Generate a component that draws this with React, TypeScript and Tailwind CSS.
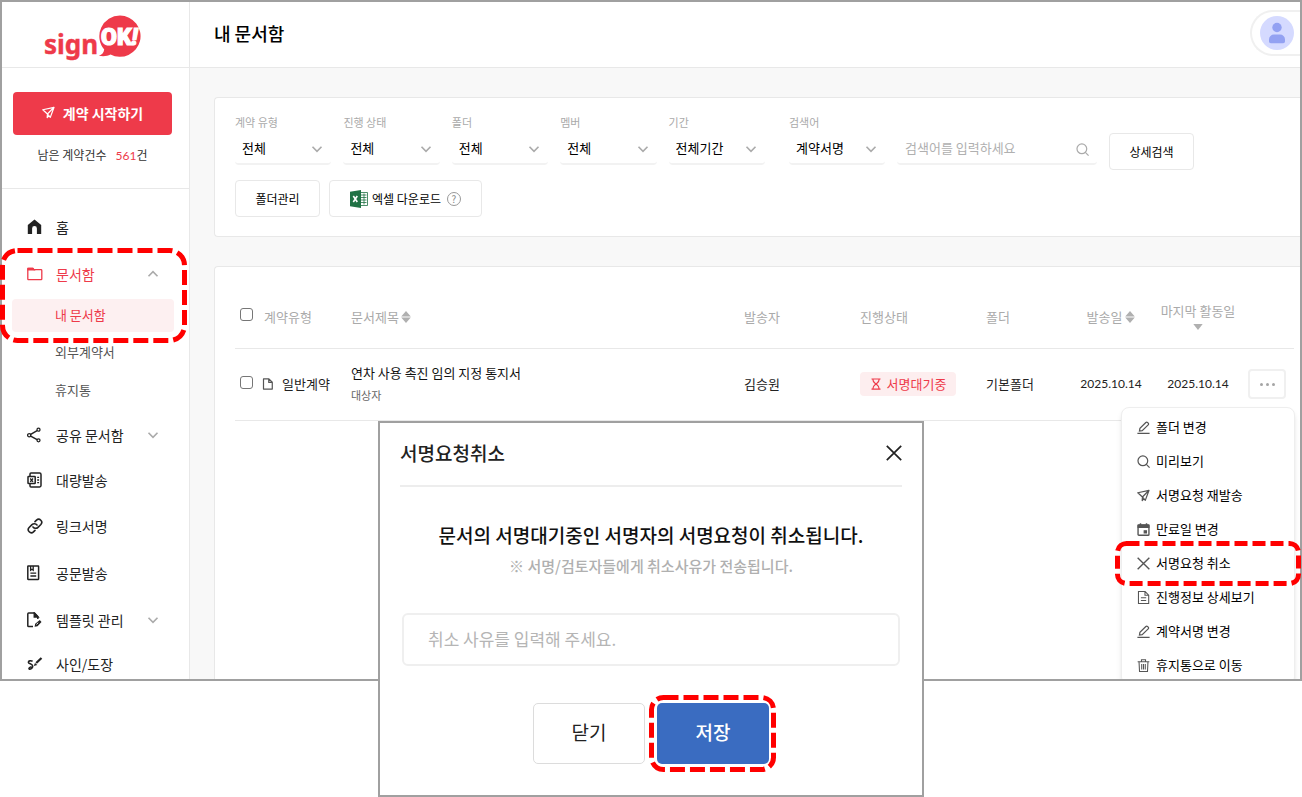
import React from "react";

type IconProps = { className?: string };

function Svg({ className = "", children, box = 16 }: { className?: string; children: React.ReactNode; box?: number }) {
  return (
    <svg
      aria-hidden="true"
      viewBox={`0 0 ${box} ${box}`}
      fill="none"
      stroke="currentColor"
      strokeWidth="1.3"
      className={`shrink-0 ${className}`}
    >
      {children}
    </svg>
  );
}

const HomeIcon = () => (
  <Svg className="size-4">
    <path d="M7.500.6 14.200 6V15H9.900V9.400a2.400 2.400 0 0 0-4.800 0V15H.8V6Z" fill="#222" stroke="none" />
  </Svg>
);
const FolderIcon = () => (
  <Svg className="size-4">
    <path d="M.8 13V3c0-.4.3-.7.7-.7h4.300l1.200 1.300h7c.5 0 .8.3.8.8V13c0 .4-.3.7-.7.7H1.500a.7.700 0 0 1-.7-.7Z" />
    <path d="M1 2.500h4.800l1.200 1.300H1Z" fill="currentColor" />
  </Svg>
);
const ShareIcon = () => (
  <Svg className="size-4">
    <circle cx="2.2" cy="8.200" r="1.600" />
    <circle cx="11.500" cy="2.700" r="1.500" />
    <circle cx="11.500" cy="13.300" r="1.500" />
    <path strokeWidth="1.500" d="m3.700 7.400 6.400-3.800M3.700 9.100l6.400 3.500" />
  </Svg>
);
const BulkIcon = () => (
  <Svg className="size-4">
    <path strokeWidth="1.500" d="M3 4V2c0-.6.4-1 1-1h8.600c.8 0 1.400.6 1.400 1.400v11.200c0 .8-.6 1.400-1.400 1.400H4c-.6 0-1-.4-1-1v-2" />
    <rect x="1" y="4.500" width="7.200" height="7" rx=".6" strokeWidth="1.500" />
    <path d="m3.200 6.500 2.800 3.300m0-3.300L3.200 9.800M10.200 5.300h1.900M10.200 8h1.900M10.200 10.700h1.900" />
  </Svg>
);
const LinkIcon = () => (
  <Svg className="size-4" box={24}>
    <path
      strokeWidth="2.400"
      strokeLinecap="round"
      d="M9 13.500a5 5 0 0 0 7.500.5l4.300-4.300a4.600 4.600 0 0 0-6.500-6.500l-2.300 2.300M15 10.500a5 5 0 0 0-7.500-.5l-4.300 4.300a4.600 4.600 0 0 0 6.500 6.500l2.300-2.300"
    />
  </Svg>
);
const OfficialIcon = () => (
  <Svg className="size-4">
    <rect x=".8" y="1" width="10.800" height="13.400" rx=".4" strokeWidth="1.500" />
    <path d="M3.600 1v4.200l1.300-1 1.300 1V1M3.400 8.200h5.800M3.400 11h5.800" />
  </Svg>
);
const TemplateIcon = () => (
  <Svg className="size-4">
    <path strokeWidth="1.500" d="M6 14.600H1.700a.9.900 0 0 1-.9-.9V2c0-.5.4-.9.900-.9H7.500l3.300 3.500v2.500" />
    <path d="M7.200 1v4h4Z" fill="currentColor" />
    <path d="m7.600 14.800.6-3 4.600-3.900 1.700 2-4 4.400Z" fill="currentColor" stroke="none" />
    <path d="m9.400 12.400 1.800-1.600" stroke="#fff" strokeWidth=".9" />
  </Svg>
);
const StampIcon = () => (
  <Svg className="size-4">
    <path strokeWidth="1.600" d="M5.600 5.300C4 4.400 1.200 4.800 1.400 6.300c.3 1.700 4.300 1.500 4.300 3.900 0 1.900-2.500 3.500-3.500 2.800-.8-.7.700-1.900 2.300-2.200" />
    <path d="m9.200 7 5.300-5" strokeWidth="2.200" />
    <path d="m6.700 10 1.300-3 2.300 2Z" fill="currentColor" stroke="none" />
  </Svg>
);
const PlaneIcon = ({ className = "size-[13px]" }: IconProps) => (
  <Svg className={className}>
    <path strokeWidth="1.500" strokeLinejoin="round" d="m1 4.600 13.800-3-4.600 12.400-3.500-4.200ZM14.800 1.600 6.700 9.800l-.3 4.400 2-2.200" />
  </Svg>
);
const Chevron = ({ up = false, className = "" }: { up?: boolean; className?: string }) => (
  <Svg className={`size-3 text-[#ababab] ${className}`}>
    <path strokeWidth="2.200" d={up ? "m2 11 6-6 6 6" : "m2 5 6 6 6-6"} />
  </Svg>
);
const SearchIcon = ({ className = "" }: IconProps) => (
  <Svg className={`size-[13px] ${className}`}>
    <circle cx="7.200" cy="7.200" r="6" strokeWidth="1.500" />
    <path d="m11.500 11.500 4 4" strokeWidth="1.500" />
  </Svg>
);
const PencilIcon = () => (
  <Svg className="size-[13px]">
    <path strokeWidth="1.500" d="m3 12.300.6-3.200 7.300-7.300c.6-.6 1.400-.6 2 0l.9.900c.6.600.6 1.400 0 2l-7.400 7.200ZM.5 15.200h15" />
  </Svg>
);
const CalendarIcon = () => (
  <Svg className="size-[13px]">
    <rect x="1.300" y="2.500" width="13.400" height="12.500" rx="1" strokeWidth="1.700" />
    <path d="M1.300 2.500h13.400v3H1.300ZM8.800 9.500h2.900v2.700H8.800Z" fill="currentColor" />
    <path d="M4.300.3v3M11.700.3v3" strokeWidth="1.800" />
  </Svg>
);
const CloseIcon = ({ className = "size-[13px]" }: IconProps) => (
  <Svg className={className}>
    <path d="M.8.800 15.200 15.200M15.200.800.8 15.200" strokeWidth="1.700" />
  </Svg>
);
const DocIcon = () => (
  <Svg className="size-[13px]">
    <path d="M1.800 15.300V.7h8.200l4.400 4.500v10.100ZM9.800.8v4.500h4.500M4.800 8.300h6.500M4.800 11.600h6.500" />
  </Svg>
);
const TrashIcon = () => (
  <Svg className="size-[13px]">
    <path d="M.8 3.300h14.400M5.500 3V1h5v2M2.500 3.500l.6 11.800h9.800l.6-11.800M5.800 6v6.800M8 6v6.800M10.200 6v6.800" />
  </Svg>
);
const FileIcon = () => (
  <Svg className="size-3 text-[#555]">
    <path strokeLinejoin="round" strokeWidth="1.600" d="M2 14.800V1.200h7.200l4.500 4.500v9.100ZM9 1.500v4.400h4.500" />
  </Svg>
);
const HourglassIcon = () => (
  <Svg className="size-3">
    <path strokeWidth="1.600" d="M2 1.300h12M2 14.700h12M3.800 1.500c0 4 2.400 5 4.200 6.500 1.800-1.500 4.200-2.500 4.200-6.500M3.800 14.500c0-4 2.400-5 4.200-6.500 1.800 1.500 4.200 2.500 4.200 6.500" />
  </Svg>
);
const ExcelIcon = () => (
  <svg aria-hidden="true" viewBox="0 0 18 18" className="size-[18px] shrink-0">
    <path d="M10 2.500h7.500v13H10Z" fill="#fff" stroke="#207245" strokeWidth=".8" />
    <path d="M11 5h5.500M11 7.500h5.500M11 10h5.500M11 12.500h5.500M14 3.500v11" stroke="#207245" strokeWidth=".8" />
    <path d="M0 1.800 11 0v18L0 16.200Z" fill="#207245" />
    <path d="m3.300 6 4 6m0-6-4 6" stroke="#fff" strokeWidth="1.600" />
  </svg>
);
const Sorter = () => (
  <svg aria-hidden="true" viewBox="0 0 10 12" className="mt-0.5 h-3 w-[10px] shrink-0" fill="#b0b0b0">
    <path d="M5 0 9.800 5.400H.2ZM5 12 .2 6.600h9.600Z" />
  </svg>
);

function Highlight({ w, h, r, dash, className }: { w: number; h: number; r: number; dash: string; className: string }) {
  return (
    <svg aria-hidden="true" width={w} height={h} className={`pointer-events-none absolute z-20 max-w-none ${className}`}>
      <rect x="2.5" y="2.5" width={w - 5} height={h - 5} rx={r} fill="none" stroke="#ff0000" strokeWidth="5" strokeDasharray={dash} />
    </svg>
  );
}

function Logo() {
  return (
    <a href="#home" aria-label="signOK!">
      <svg viewBox="0 0 98 46" className="h-[46px] w-[98px]">
        <text x="0" y="39" fill="#ee3a4a" stroke="#ee3a4a" strokeWidth=".4" fontFamily="'Noto Sans'" fontWeight="700" fontSize="26">sign</text>
        <path d="M76 .6a20.600 20.600 0 1 1-9.500 38.900c-3 1.500-6.500 2.100-11.600 1.300 3.200-1.200 4.800-2.900 5.300-6.300A20.600 20.600 0 0 1 76 .6Z" fill="#ee3a4a" />
        <text x="57" y="30" fill="#fff" stroke="#fff" strokeWidth="1.200" fontFamily="Roboto" fontWeight="900" fontSize="23">
          OK<tspan fontStyle="italic">!</tspan>
        </text>
      </svg>
    </a>
  );
}

const navLink = "flex items-center gap-[13px] pl-[25px] pr-[30px] pb-0.5 text-sm text-[#222]";
const subLink = "flex h-[38px] items-center pb-0.5 pl-[53px] text-[13px] text-[#555]";

function Sidebar() {
  return (
    <aside className="flex w-[188px] shrink-0 flex-col border-r border-[#e8e8e8] bg-white">
      <div className="flex h-[66px] items-start justify-center border-b border-[#e8e8e8] pt-[13px] pr-[5px]">
        <Logo />
      </div>
      <div className="flex h-[121px] flex-col items-center border-b border-[#e8e8e8] pt-6 pr-[17px] pl-[11px]">
        <button className="flex h-[43px] w-full items-center justify-center gap-2 rounded bg-[#ee3a4a] pb-0.5 text-sm font-bold text-white">
          <PlaneIcon />
          계약 시작하기
        </button>
        <p className="mt-[10px] flex gap-[9px] text-xs leading-5 text-[#333]">
          <span>남은 계약건수</span>
          <span>
            <span className="font-[Lato] text-[#ee3a4a]">561</span>건
          </span>
        </p>
      </div>
      <nav className="pt-4">
        <a href="#home" className={`${navLink} h-[46px]`}>
          <HomeIcon />홈
        </a>
        <div className="relative">
          <a href="#docs" className="flex h-12 items-center gap-[13px] pr-[30px] pb-0.5 pl-[25px] text-sm text-[#ee3a4a]">
            <FolderIcon />
            <span className="grow">문서함</span>
            <Chevron up />
          </a>
          <a href="#mine" className="mr-[15px] ml-[10px] flex h-[33px] items-center rounded bg-[#fdf0f1] pb-0.5 pl-[43px] text-[13px] text-[#ee3a4a]">
            내 문서함
          </a>
          <Highlight w={187} h={95} r={15} dash="15 5" className="top-[-3px] left-[-2px]" />
        </div>
        <a href="#external" className={`${subLink} mt-0.5`}>외부계약서</a>
        <a href="#trash" className={`${subLink} mb-[3px]`}>휴지통</a>
        <a href="#shared" className={`${navLink} h-[45px]`}>
          <ShareIcon />
          <span className="grow">공유 문서함</span>
          <Chevron />
        </a>
        <a href="#bulk" className={`${navLink} h-[45px]`}>
          <BulkIcon />대량발송
        </a>
        <a href="#link" className={`${navLink} h-[47px]`}>
          <LinkIcon />링크서명
        </a>
        <a href="#official" className={`${navLink} h-[47px]`}>
          <OfficialIcon />공문발송
        </a>
        <a href="#template" className={`${navLink} h-[47px]`}>
          <TemplateIcon />
          <span className="grow">템플릿 관리</span>
          <Chevron />
        </a>
        <a href="#stamp" className={`${navLink} h-[35px] pt-[7px]`}>
          <StampIcon />사인/도장
        </a>
      </nav>
    </aside>
  );
}

function FilterSelect({ id, label, value }: { id: string; label: string; value: string }) {
  return (
    <div>
      <label htmlFor={id} className="block text-[11px] leading-4 text-[#aaa]">{label}</label>
      <div className="relative mt-0.5">
        <select id={id} className="block h-[33px] w-full appearance-none rounded border-b-2 border-[#f2f2f2] bg-transparent pl-[7px] text-[13px] text-black">
          <option>{value}</option>
        </select>
        <Chevron className="pointer-events-none absolute top-[11px] right-2" />
      </div>
    </div>
  );
}

const outlineButton =
  "flex h-[37px] items-center justify-center rounded border border-[#e8e8e8] bg-white text-xs text-black";

function Filters() {
  return (
    <section className="rounded-l border border-r-0 border-[#e8e8e8] bg-white px-5 pt-4 pb-[19px]">
      <div className="flex items-end">
        <div className="grid w-[530px] grid-cols-5 gap-3">
          <FilterSelect id="type" label="계약 유형" value="전체" />
          <FilterSelect id="status" label="진행 상태" value="전체" />
          <FilterSelect id="folder" label="폴더" value="전체" />
          <FilterSelect id="member" label="멤버" value="전체" />
          <FilterSelect id="period" label="기간" value="전체기간" />
        </div>
        <div className="ml-6 w-24">
          <FilterSelect id="keyword" label="검색어" value="계약서명" />
        </div>
        <div className="relative ml-3 w-[200px]">
          <input
            aria-label="검색어 입력"
            placeholder="검색어를 입력하세요"
            className="block h-[33px] w-full rounded border-b-2 border-[#f2f2f2] pr-8 pl-2 text-[13px] placeholder:text-[#b0b0b0]"
          />
          <SearchIcon className="absolute top-[11px] right-2 text-[#aaa]" />
        </div>
        <button className={`${outlineButton} -mb-[5px] ml-3 w-[85px]`}>상세검색</button>
      </div>
      <div className="mt-[15px] flex gap-[9px]">
        <button className={`${outlineButton} w-[85px]`}>폴더관리</button>
        <button className={`${outlineButton} w-[153px] gap-1`}>
          <ExcelIcon />
          엑셀 다운로드
          <span className="ml-0.5 flex size-[14px] items-center justify-center rounded-full border border-[#999] text-[10px] leading-none text-[#888]">?</span>
        </button>
      </div>
    </section>
  );
}

const menuItems: { label: string; icon: React.ReactNode; marked?: boolean }[] = [
  { label: "폴더 변경", icon: <PencilIcon /> },
  { label: "미리보기", icon: <SearchIcon /> },
  { label: "서명요청 재발송", icon: <PlaneIcon /> },
  { label: "만료일 변경", icon: <CalendarIcon /> },
  { label: "서명요청 취소", icon: <CloseIcon />, marked: true },
  { label: "진행정보 상세보기", icon: <DocIcon /> },
  { label: "계약서명 변경", icon: <PencilIcon /> },
  { label: "휴지통으로 이동", icon: <TrashIcon /> },
];

function RowMenu() {
  return (
    <ul className="absolute top-full right-[-9px] mt-2 w-[174px] rounded-lg border border-[#eee] bg-white py-[2px] text-left shadow-md">
      {menuItems.map((item) => (
        <li key={item.label} className="relative">
          <button className="flex h-[34px] w-full items-center gap-[6px] pl-[15px] text-[13px] whitespace-nowrap text-black">
            <span className="text-[#555]">{item.icon}</span>
            {item.label}
          </button>
          {item.marked && <Highlight w={186} h={45} r={9} dash="13 5" className="top-[-5px] left-[-7px]" />}
        </li>
      ))}
    </ul>
  );
}

const checkbox = "block size-[13px] shrink-0 appearance-none rounded-[3px] border border-[#767676] bg-white";

function Documents() {
  return (
    <section className="mt-[29px] grow rounded-tl border-t border-l border-[#e8e8e8] bg-white pt-[18px] pr-[6px] pl-5">
      <table className="w-full table-fixed border-collapse text-[13px]">
        <colgroup>
          <col className="w-[116px]" />
          <col />
          <col className="w-[116px]" />
          <col className="w-[126px]" />
          <col className="w-[82px]" />
          <col className="w-[86px]" />
          <col className="w-[88px]" />
          <col className="w-[52px]" />
        </colgroup>
        <thead>
          <tr className="h-[63px] border-b border-[#e8e8e8] text-left text-[#aaa] *:p-0 *:font-normal">
            <th>
              <div className="flex items-center gap-[11px] pl-[5px]">
                <input type="checkbox" aria-label="전체 선택" className={`${checkbox} mb-1`} />
                계약유형
              </div>
            </th>
            <th>
              <div className="flex items-center gap-[2px]">문서제목<Sorter /></div>
            </th>
            <th>발송자</th>
            <th>진행상태</th>
            <th>폴더</th>
            <th>
              <div className="flex items-center justify-center gap-[3px]">발송일<Sorter /></div>
            </th>
            <th>
              <div className="flex flex-col items-center gap-1 pb-0.5 whitespace-nowrap">
                마지막 활동일
                <svg aria-hidden="true" viewBox="0 0 10 6" className="h-[6px] w-[10px]" fill="#b0b0b0">
                  <path d="M.3 0h9.400L5 6Z" />
                </svg>
              </div>
            </th>
            <th aria-label="메뉴" />
          </tr>
        </thead>
        <tbody>
          <tr className="h-[72px] border-b border-[#e8e8e8] text-[#222] *:p-0">
            <td>
              <div className="flex items-center pl-[5px]">
                <input type="checkbox" aria-label="연차 사용 촉진 임의 지정 통지서 선택" className={`${checkbox} mr-[9px] mb-1`} />
                <FileIcon />
                <span className="ml-2">일반계약</span>
              </div>
            </td>
            <td>
              <p className="leading-5 text-[#111]">연차 사용 촉진 임의 지정 통지서</p>
              <p className="mt-1 mb-0.5 text-[11px] leading-4 text-[#666]">대상자</p>
            </td>
            <td>김승원</td>
            <td>
              <span className="flex h-6 w-24 items-center justify-center gap-[5px] rounded bg-[#fdeeef] whitespace-nowrap text-[#ee3a4a]">
                <HourglassIcon />
                서명대기중
              </span>
            </td>
            <td>기본폴더</td>
            <td className="text-center font-[Lato] text-xs">2025.10.14</td>
            <td className="text-center font-[Lato] text-xs">2025.10.14</td>
            <td>
              <div className="relative mr-2 ml-[6px]">
                <button aria-label="더보기" className="flex h-[30px] w-full items-center justify-center gap-[3px] rounded border-2 border-[#f0f0f0] bg-white">
                  <i className="size-[3px] rounded-full bg-[#a5a5a5]" />
                  <i className="size-[3px] rounded-full bg-[#a5a5a5]" />
                  <i className="size-[3px] rounded-full bg-[#a5a5a5]" />
                </button>
                <RowMenu />
              </div>
            </td>
          </tr>
        </tbody>
      </table>
    </section>
  );
}

function CancelDialog() {
  return (
    <div role="dialog" aria-labelledby="cancel-title" className="w-[546px] border-2 border-[#a0a0a0] bg-white px-5 pb-[31px]">
      <div className="flex h-16 items-center justify-between border-b-2 border-[#ededed] pb-0.5 text-[#222]">
        <h2 id="cancel-title" className="text-[19px] font-medium">서명요청취소</h2>
        <button aria-label="닫기">
          <CloseIcon className="size-4" />
        </button>
      </div>
      <p className="mt-[34px] text-center text-[19px] leading-7 font-medium text-[#111]">
        문서의 서명대기중인 서명자의 서명요청이 취소됩니다.
      </p>
      <p className="mt-[5px] text-center text-[15px] leading-6 font-medium text-[#b0b0b0]">※ 서명/검토자들에게 취소사유가 전송됩니다.</p>
      <div className="px-[2px]">
        <input
          aria-label="취소 사유"
          placeholder="취소 사유를 입력해 주세요."
          className="mt-[35px] block h-[53px] w-full rounded-md border-2 border-[#efefef] px-6 pb-0.5 text-[17px] placeholder:text-[#b5b5b5]"
        />
      </div>
      <div className="mt-[37px] flex justify-center gap-3 text-[19px]">
        <button className="h-[61px] w-28 rounded-[5px] border border-[#dcdcdc] pb-0.5 text-[#222]">닫기</button>
        <div className="relative">
          <button className="block h-[61px] w-28 rounded-[5px] bg-[#3a6cc1] pb-0.5 font-medium text-white">저장</button>
          <Highlight w={127} h={77} r={12} dash="15 5" className="top-[-8px] left-[-8px]" />
        </div>
      </div>
    </div>
  );
}

export default function App() {
  return (
    <div className="relative min-h-screen bg-white font-['Noto_Sans_CJK_KR',sans-serif]">
      <div className="relative flex overflow-hidden p-[2px]">
        <Sidebar />
        <main className="flex min-w-0 grow flex-col bg-[#f8f8f8]">
          <header className="flex h-[66px] shrink-0 items-center justify-between border-b border-[#e8e8e8] bg-white pb-[3px] pl-6">
            <h1 className="text-lg font-medium text-black">내 문서함</h1>
            <button aria-label="내 계정" className="flex h-[46px] items-center rounded-l-full border-2 border-r-0 border-[#f0f0f0] pr-[6px] pl-2">
              <svg aria-hidden="true" viewBox="0 0 34 34" className="size-[34px]">
                <circle cx="17" cy="17" r="17" fill="#d5daff" />
                <circle cx="17" cy="11.500" r="4.700" fill="#93a1f2" />
                <path d="M9 25.500v-2a5 5 0 0 1 5-5h6a5 5 0 0 1 5 5v2a1.800 1.800 0 0 1-1.800 1.800H10.800A1.800 1.800 0 0 1 9 25.500Z" fill="#93a1f2" />
              </svg>
            </button>
          </header>
          <div className="flex grow flex-col pt-[29px] pl-6">
            <Filters />
            <Documents />
          </div>
        </main>
        <div className="pointer-events-none absolute inset-0 z-10 border-2 border-[#a0a0a0]" />
      </div>
      <div className="absolute inset-x-0 top-[421px] z-30 flex justify-center">
        <CancelDialog />
      </div>
    </div>
  );
}
